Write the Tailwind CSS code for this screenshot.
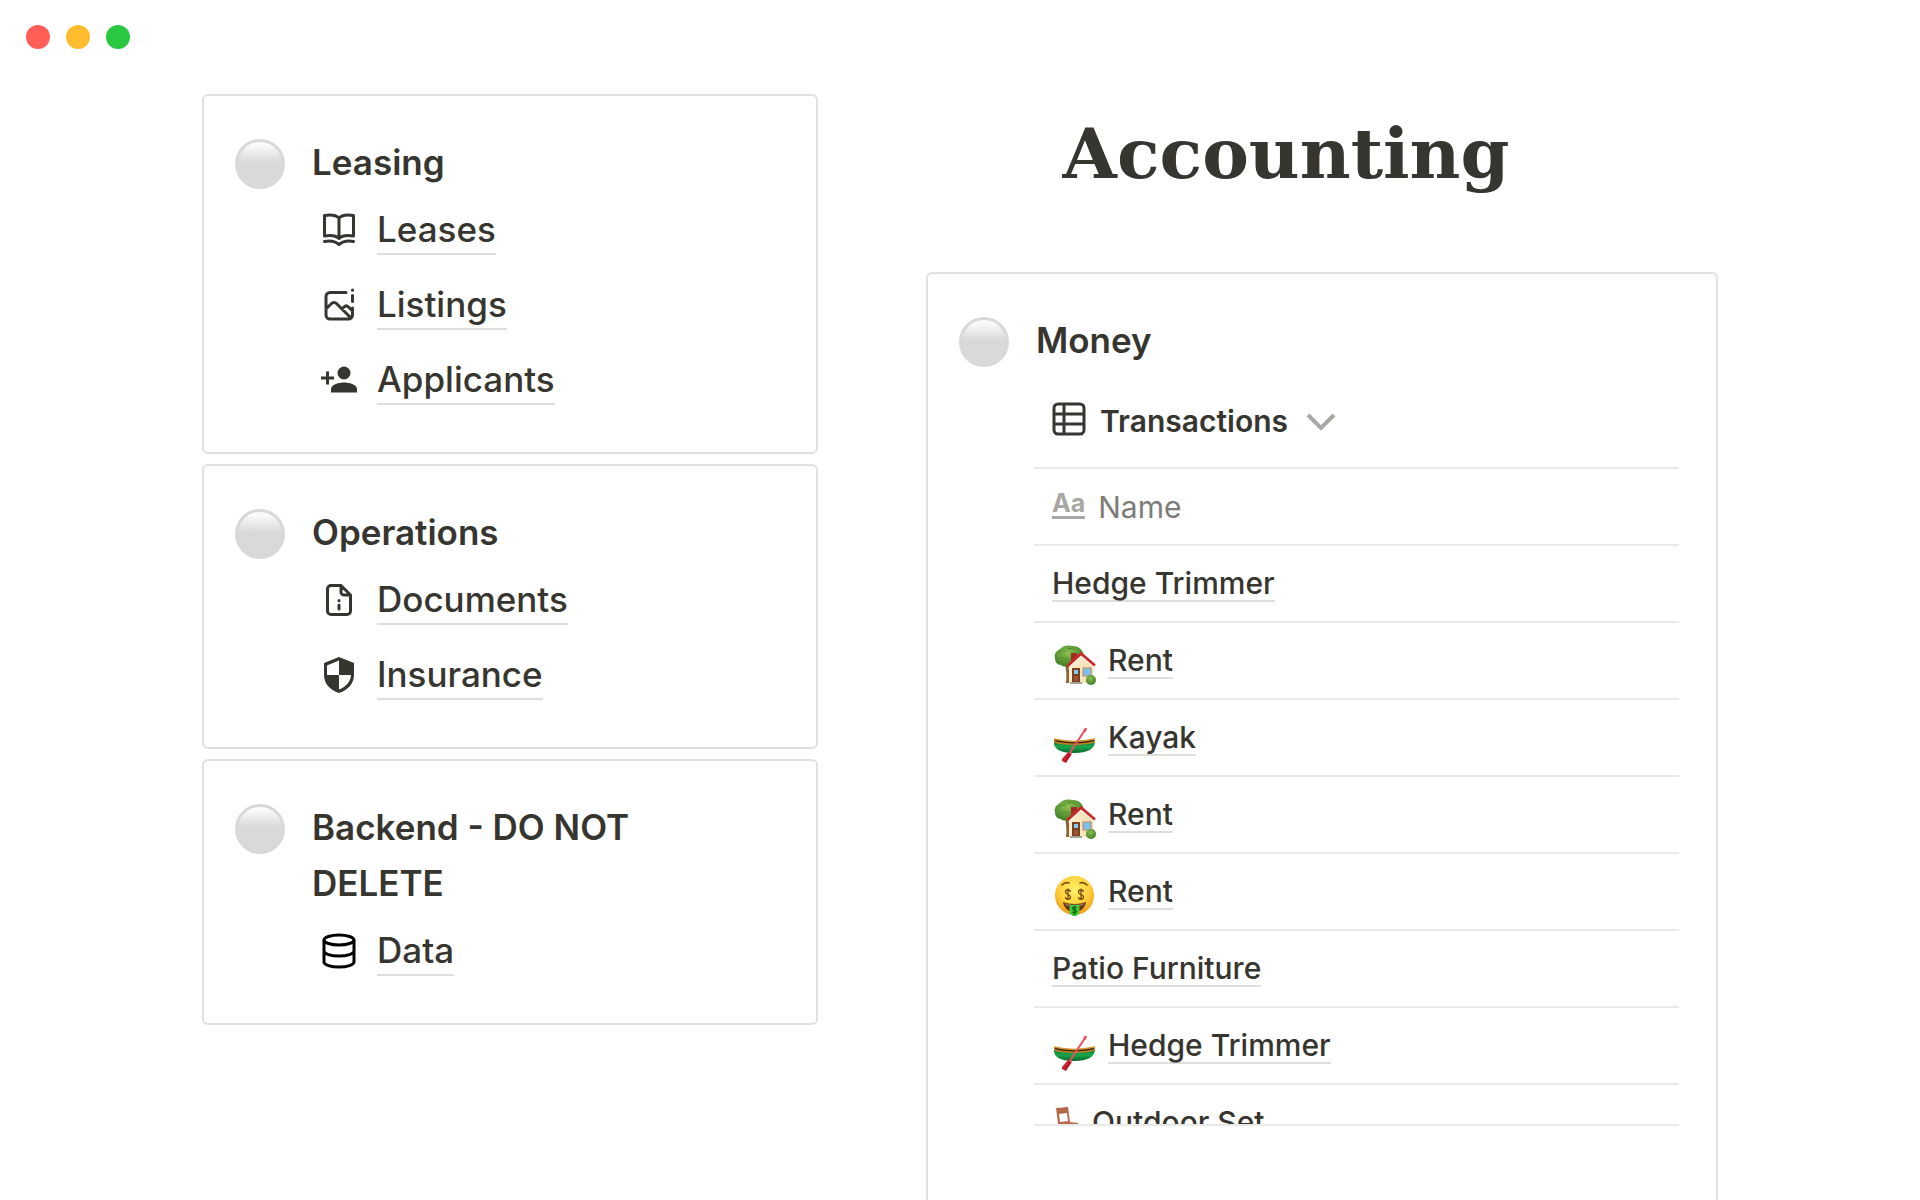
<!DOCTYPE html>
<html lang="en">
<head>
    <meta charset="UTF-8">
    <meta name="viewport" content="width=device-width, initial-scale=1.0">
    <title>Accounting</title>
    <script src="https://cdn.jsdelivr.net/npm/@tailwindcss/browser@4"></script>
</head>
<body class="h-screen overflow-hidden bg-white font-['Inter','Liberation_Sans',sans-serif] text-[#37352f]">
    <!-- shared emoji drawings -->
    <svg class="absolute size-0" aria-hidden="true">
        <defs>
            <radialGradient id="leaf" cx="45%" cy="35%" r="65%"><stop offset="0" stop-color="#8cc152"/><stop offset="1" stop-color="#3f7d26"/></radialGradient>
            <linearGradient id="wall" x1="0" x2="1"><stop offset="0" stop-color="#fdf0cf"/><stop offset="1" stop-color="#f2dcae"/></linearGradient>
            <linearGradient id="hull" x1="0" x2="0" y1="0" y2="1"><stop offset="0" stop-color="#0a7a35"/><stop offset=".5" stop-color="#1aa64c"/><stop offset="1" stop-color="#04662a"/></linearGradient>
            <radialGradient id="face" cx="50%" cy="35%" r="65%"><stop offset="0" stop-color="#fff26a"/><stop offset=".6" stop-color="#fdd03a"/><stop offset="1" stop-color="#f09a16"/></radialGradient>
            <linearGradient id="shine" x1="0" x2="0" y1="0" y2="1"><stop offset="0" stop-color="#fdfdfd"/><stop offset=".1" stop-color="#fafafa"/><stop offset=".46" stop-color="#d9d9d9"/></linearGradient>
        </defs>
        <symbol id="house" viewBox="0 0 44 44">
            <path d="M13 20h5v20h-4c1-7 0-13-1-20z" fill="#8a6236"/>
            <path d="M3 15c-1-4 1-7 5-9 3-4 9-4 13-3 5 0 9 3 10 7 2 4 0 8-4 9-2 3-6 4-9 3-3 2-7 2-9 0-4 0-6-3-6-7z" fill="url(#leaf)"/>
            <path d="M7 10c3-3 5-2 7-1M8 16c3-2 6-1 8 0M15 6c3-1 6-1 8 1" fill="none" stroke="#4f8f2d" stroke-width="1"/>
            <path d="M19 10h6v8l-6 4z" fill="#a32a22"/>
            <path d="M17 23 29 12l12 10v18H17z" fill="url(#wall)"/>
            <path d="M15 23.500 29 10.500 43 22.500" fill="none" stroke="#c9282d" stroke-width="2.600"/>
            <path d="M16 25.500 29 13.500 41 23.500" fill="none" stroke="#fff" stroke-width="1" opacity=".7"/>
            <rect x="20" y="25" width="8" height="15" fill="#7b3f22"/>
            <rect x="22" y="27" width="4" height="4" fill="#8cc9ee"/>
            <path d="M22 33h4v5h-4z" fill="#9a5634"/>
            <rect x="31" y="25" width="8" height="8" fill="#7fc0ee" stroke="#b08a62"/>
            <path d="M18 39h12v2H18z" fill="#a7a29a"/>
            <circle cx="39" cy="37" r="5" fill="url(#leaf)"/>
        </symbol>
        <symbol id="canoe" viewBox="0 0 44 44">
            <path d="M2 15c12 3 28 3 41 0l-2 6H4z" fill="#3a2412"/>
            <path d="M2 17c6 4 34 4 41 0 0 8-7 12-21 12S1 25 2 17z" fill="url(#hull)"/>
            <path d="M2 15c12 3 28 3 41 0" fill="none" stroke="#d9962e" stroke-width="1.600"/>
            <path d="M2 17.500c9 3.500 31 3.500 41 0" fill="none" stroke="#c98222" stroke-width="1.400"/>
            <path d="M33 6 17 30" stroke="#e8525f" stroke-width="2"/>
            <path d="m31 6 2-2h2l-1 4z" fill="#e8525f"/>
            <path d="m16 28 4 2-6 9-4-2 0-2z" fill="#cf1f2d"/>
            <path d="m18 30-5 8" stroke="#8f0f1d" stroke-width="1"/>
        </symbol>
        <symbol id="money" viewBox="0 0 44 44">
            <circle cx="22.500" cy="21.500" r="19.500" fill="url(#face)"/>
            <path d="M10 11c2-2 4-3 7-2M28 9c3-1 5 0 7 2" fill="none" stroke="#7c4a12" stroke-width="1.600" stroke-linecap="round"/>
            <path d="M11 28c7 2.500 16 2.500 23 0-1 6-5 10-11.500 10S12 34 11 28z" fill="#6b3410"/>
            <path d="M12.500 29c6 2 14 2 20 0l-1 2.500c-5 1.500-13 1.500-18 0z" fill="#fff" opacity=".25"/>
            <path d="M17.500 31h10v8l-3 3h-4l-3-3z" fill="#3fce3a"/>
            <g fill="none" stroke="#7c4a12" stroke-width="1.300">
                <path d="M18.500 18c-.5-3-5-3-5 0s5 2 5 5-5 3-5 0M16 14.500v11M31.500 18c-.5-3-5-3-5 0s5 2 5 5-5 3-5 0M29 14.500v11"/>
                <path stroke="#14641a" d="M24.500 34.500c-.5-2-4-2-4 0s4 1 4 3-3.500 2-4 0M22.500 32v9"/>
            </g>
        </symbol>
        <symbol id="ball" viewBox="0 0 50 50">
            <circle cx="25" cy="25" r="23.500" fill="url(#shine)" stroke="#d8d8d8" stroke-width="3"/>
        </symbol>
    </svg>

    <header class="flex h-[74px] items-center gap-4 px-[26px]">
        <span class="size-6 rounded-full bg-[#ff5f57]"></span>
        <span class="size-6 rounded-full bg-[#febc2e]"></span>
        <span class="size-6 rounded-full bg-[#28c840]"></span>
    </header>

    <main class="grid grid-cols-[7fr_9fr] items-start gap-[108px] px-[202px] pt-5">
        <div class="flex flex-col gap-[10px]">
            <section class="flex gap-[25px] rounded-md border-2 border-[#e0e0de] pt-[38px] pr-16 pb-[34px] pl-[31px]">
                <svg class="mt-[5px] size-[50px] shrink-0"><use href="#ball"/></svg>
                <div class="flex-1">
                    <h2 class="mb-[3px] pl-[2px] text-[35px] leading-[56px] font-semibold">Leasing</h2>
                    <ul class="pl-[11px] text-[35px] leading-[44px] font-medium">
                        <li class="flex h-[75px] items-center gap-5">
                            <svg class="mb-[2px] size-9" viewBox="0 0 36 36" fill="none" stroke="currentColor" stroke-width="3" stroke-linecap="round" stroke-linejoin="round"><path d="M18 6c-3-3-9-3.500-14.500-2.500V24c5.500-1 11.500-.5 14.500 2.500 3-3 9-3.500 14.500-2.500V3.500C27 2.500 21 3 18 6zM18 6v20M3.500 29.500c5.500-1 11 0 14.500 3 3.500-3 9-4 14.500-3"/></svg>
                            <a href="#" class="border-b-2 border-[#dededc] pb-[2px]">Leases</a>
                        </li>
                        <li class="flex h-[75px] items-center gap-5">
                            <svg class="mb-[2px] size-9" viewBox="0 0 36 36" fill="none" stroke="currentColor" stroke-width="3" stroke-linecap="round" stroke-linejoin="round"><path d="M25 5.500H9a4 4 0 0 0-4 4V28a4 4 0 0 0 4 4h18.500a4 4 0 0 0 4-4v-7M31.500 8.500v6M31.500 3v.2M5 22l5-5c2-2 4-2 6 0l14 14M21 22l2-2c1.500-1.500 3-1.500 4.500 0l4 4"/></svg>
                            <a href="#" class="border-b-2 border-[#dededc] pb-[2px]">Listings</a>
                        </li>
                        <li class="flex h-[75px] items-center gap-5">
                            <svg class="mb-[2px] size-9" viewBox="0 0 36 36" fill="currentColor"><circle cx="23" cy="11" r="6.500"/><path d="M10 30.500V27c0-4.500 8-6.500 13-6.500S36 22.500 36 27v3.500z"/><path d="M6.500 9.500v13M0 16h13" stroke="currentColor" stroke-width="3"/></svg>
                            <a href="#" class="border-b-2 border-[#dededc] pb-[2px]">Applicants</a>
                        </li>
                    </ul>
                </div>
            </section>

            <section class="flex gap-[25px] rounded-md border-2 border-[#e0e0de] pt-[38px] pr-16 pb-[34px] pl-[31px]">
                <svg class="mt-[5px] size-[50px] shrink-0"><use href="#ball"/></svg>
                <div class="flex-1">
                    <h2 class="mb-[3px] pl-[2px] text-[35px] leading-[56px] font-semibold">Operations</h2>
                    <ul class="pl-[11px] text-[35px] leading-[44px] font-medium">
                        <li class="flex h-[75px] items-center gap-5">
                            <svg class="mb-[2px] size-9" viewBox="0 0 36 36" fill="none" stroke="currentColor" stroke-width="3" stroke-linecap="round" stroke-linejoin="round"><path d="M20 3.500H10A3.500 3.500 0 0 0 6.500 7v22a3.500 3.500 0 0 0 3.500 3.500h16a3.500 3.500 0 0 0 3.500-3.500V13zM20 3.500V10a3 3 0 0 0 3 3h6.500M18 18.500v.2M18 23v4"/></svg>
                            <a href="#" class="border-b-2 border-[#dededc] pb-[2px]">Documents</a>
                        </li>
                        <li class="flex h-[75px] items-center gap-5">
                            <svg class="mb-[2px] size-9" viewBox="0 0 36 36" fill="currentColor" fill-rule="evenodd"><path d="M18 0 33 6v12c0 8-5.500 15-15 18C8.500 33 3 26 3 18V6zM18 3.500 6 8.500V18h12zM18 18v14.500c7-2.500 11.500-8 12-14.500z"/></svg>
                            <a href="#" class="border-b-2 border-[#dededc] pb-[2px]">Insurance</a>
                        </li>
                    </ul>
                </div>
            </section>

            <section class="flex gap-[25px] rounded-md border-2 border-[#e0e0de] pt-[38px] pr-16 pb-[34px] pl-[31px]">
                <svg class="mt-[5px] size-[50px] shrink-0"><use href="#ball"/></svg>
                <div class="flex-1">
                    <h2 class="mb-[3px] pl-[2px] text-[35px] leading-[56px] font-semibold">Backend - DO NOT DELETE</h2>
                    <ul class="pl-[11px] text-[35px] leading-[44px] font-medium">
                        <li class="flex h-[75px] items-center gap-5">
                            <svg class="mb-[2px] size-9 text-black" viewBox="0 0 36 36" fill="none" stroke="currentColor" stroke-width="3"><ellipse cx="18" cy="7" rx="15" ry="5"/><path d="M3 7v22c0 2.800 6.700 5 15 5s15-2.200 15-5V7M3 18c0 2.800 6.700 5 15 5s15-2.200 15-5"/></svg>
                            <a href="#" class="border-b-2 border-[#dededc] pb-[2px]">Data</a>
                        </li>
                    </ul>
                </div>
            </section>
        </div>

        <div>
            <h1 class="h-[178px] pt-3 pr-[72px] text-center font-['DejaVu_Serif',serif] text-[70px] leading-[96px] font-bold">Accounting</h1>

            <section class="flex gap-[25px] rounded-md border-2 border-[#e0e0de] pt-[38px] pr-[37px] pb-24 pl-[31px]">
                <svg class="mt-[5px] size-[50px] shrink-0"><use href="#ball"/></svg>
                <div class="flex-1">
                    <h2 class="pl-[2px] text-[35px] leading-[56px] font-semibold">Money</h2>
                    <button type="button" class="flex h-[99px] items-center pt-2 pl-[18px] text-[30px] font-semibold">
                        <svg class="mr-[14px] mb-[5px] size-[34px]" viewBox="0 0 34 34" fill="none" stroke="currentColor" stroke-width="3"><rect x="2" y="2" width="30" height="30" rx="4"/><path d="M12 2v30M2 12h30M2 22h30"/></svg>
                        Transactions
                        <svg class="ml-[18px] h-[18px] w-[30px]" viewBox="0 0 30 18" fill="none" stroke="#a8a7a3" stroke-width="4"><path d="m2 2 13 13L28 2"/></svg>
                    </button>
                    <div class="h-[659px] overflow-hidden border-b-2 border-[#e9e9e7]">
                        <table class="w-full border-separate border-spacing-0 text-left text-[30px] leading-[34px] font-medium">
                            <thead>
                                <tr>
                                    <th scope="col" class="h-[77px] border-t-2 border-[#e9e9e7] pl-[18px] font-normal text-[#7d7c78]">
                                        <div class="flex items-center gap-[13px]">
                                            <span class="mb-1 border-b-[3px] border-[#a8a7a3] text-[25px] leading-[26px] font-bold text-[#a8a7a3]" aria-hidden="true">Aa</span>
                                            Name
                                        </div>
                                    </th>
                                </tr>
                            </thead>
                            <tbody>
                                <tr>
                                    <td class="h-[77px] border-t-2 border-[#e9e9e7] pb-[3px] pl-[18px]">
                                        <div class="flex h-[38px] items-center gap-3"><a href="#" class="border-b-2 border-[#dededc] pt-[3px]">Hedge Trimmer</a></div>
                                    </td>
                                </tr>
                                <tr>
                                    <td class="h-[77px] border-t-2 border-[#e9e9e7] pb-[3px] pl-[18px]">
                                        <div class="flex h-[38px] items-center gap-3"><svg class="mt-3 size-11"><use href="#house"/></svg><a href="#" class="border-b-2 border-[#dededc] pt-[3px]">Rent</a></div>
                                    </td>
                                </tr>
                                <tr>
                                    <td class="h-[77px] border-t-2 border-[#e9e9e7] pb-[3px] pl-[18px]">
                                        <div class="flex h-[38px] items-center gap-3"><svg class="mt-5 size-11"><use href="#canoe"/></svg><a href="#" class="border-b-2 border-[#dededc] pt-[3px]">Kayak</a></div>
                                    </td>
                                </tr>
                                <tr>
                                    <td class="h-[77px] border-t-2 border-[#e9e9e7] pb-[3px] pl-[18px]">
                                        <div class="flex h-[38px] items-center gap-3"><svg class="mt-3 size-11"><use href="#house"/></svg><a href="#" class="border-b-2 border-[#dededc] pt-[3px]">Rent</a></div>
                                    </td>
                                </tr>
                                <tr>
                                    <td class="h-[77px] border-t-2 border-[#e9e9e7] pb-[3px] pl-[18px]">
                                        <div class="flex h-[38px] items-center gap-3"><svg class="mt-3 size-11"><use href="#money"/></svg><a href="#" class="border-b-2 border-[#dededc] pt-[3px]">Rent</a></div>
                                    </td>
                                </tr>
                                <tr>
                                    <td class="h-[77px] border-t-2 border-[#e9e9e7] pb-[3px] pl-[18px]">
                                        <div class="flex h-[38px] items-center gap-3"><a href="#" class="border-b-2 border-[#dededc] pt-[3px]">Patio Furniture</a></div>
                                    </td>
                                </tr>
                                <tr>
                                    <td class="h-[77px] border-t-2 border-[#e9e9e7] pb-[3px] pl-[18px]">
                                        <div class="flex h-[38px] items-center gap-3"><svg class="mt-5 size-11"><use href="#canoe"/></svg><a href="#" class="border-b-2 border-[#dededc] pt-[3px]">Hedge Trimmer</a></div>
                                    </td>
                                </tr>
                                <tr>
                                    <td class="h-[77px] border-t-2 border-[#e9e9e7] pb-[3px] pl-[18px]">
                                        <div class="flex h-[38px] items-center gap-3">
                                            <svg class="mt-3 h-11 w-7" viewBox="0 0 28 44">
                                                <path d="M4 3 16 2l2 15 8 1v5L7 26z" fill="#b5694a"/>
                                                <path d="m7 9 8-1 1 8-8 1z" fill="#fff"/>
                                                <path d="M7 23v18M24 22v18M13 24v12" stroke="#8f4c33" stroke-width="3"/>
                                            </svg>
                                            <a href="#" class="border-b-2 border-[#dededc] pt-[3px]">Outdoor Set</a>
                                        </div>
                                    </td>
                                </tr>
                            </tbody>
                        </table>
                    </div>
                </div>
            </section>
        </div>
    </main>
</body>
</html>
